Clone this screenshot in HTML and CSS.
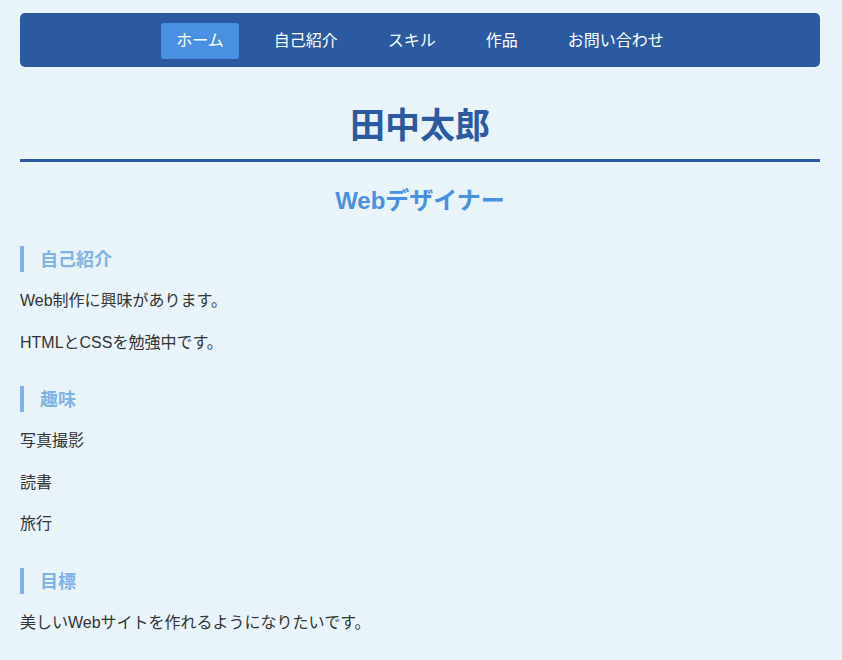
FILE: index.html
```html
<!DOCTYPE html>
<html lang="ja">
<head>
    <meta charset="UTF-8">
    <meta name="viewport" content="width=device-width, initial-scale=1.0">
    <title>田中太郎</title>
    <link rel="stylesheet" href="styles.css">
</head>
<body>
    <div class="page">
        <nav class="main-nav">
            <a href="#" class="active">ホーム</a>
            <a href="#about">自己紹介</a>
            <a href="#skills">スキル</a>
            <a href="#works">作品</a>
            <a href="#contact">お問い合わせ</a>
        </nav>

        <header class="profile-header">
            <h1>田中太郎</h1>
            <p class="job-title">Webデザイナー</p>
        </header>

        <section id="about">
            <h2>自己紹介</h2>
            <p>Web制作に興味があります。</p>
            <p>HTMLとCSSを勉強中です。</p>
        </section>

        <section>
            <h2>趣味</h2>
            <ul class="hobby-list">
                <li>写真撮影</li>
                <li>読書</li>
                <li>旅行</li>
            </ul>
        </section>

        <section>
            <h2>目標</h2>
            <p>美しいWebサイトを作れるようになりたいです。</p>
        </section>
    </div>
</body>
</html>
```

FILE: styles.css
```css
body {
    margin: 0;
    padding: 0 20px;
    background-color: #e8f4fa;
    color: #333;
    font-family: "Liberation Sans", "Noto Sans CJK JP", sans-serif;
    font-size: 16px;
}
.page {
    max-width: 800px;
    padding-top: 13px;
}
.main-nav {
    background-color: #2b5aa0;
    border-radius: 5px;
    padding: 10px 0 8px;
    display: flex;
    justify-content: center;
    gap: 20px;
}
.main-nav a {
    color: white;
    text-decoration: none;
    padding: 0 15px;
    line-height: 36px;
    border-radius: 3px;
}
.main-nav a.active {
    background-color: #4a90e2;
}
.profile-header {
    text-align: center;
}
h1 {
    color: #2b5aa0;
    font-size: 35px;
    line-height: 42px;
    margin: 38px 0 0;
    padding-bottom: 12px;
    border-bottom: 3px solid #2b5aa0;
}
.job-title {
    color: #4a90e2;
    font-size: 24px;
    font-weight: bold;
    line-height: 29px;
    margin: 24px 0 0;
}
h2 {
    color: #7fb2e6;
    font-size: 18px;
    line-height: 23px;
    margin: 31px 0 15px;
    padding: 3px 0 0 16px;
    border-left: 4px solid #7fb2e6;
}
p {
    line-height: 25.6px;
    margin: 16px 0;
}
.hobby-list {
    list-style: none;
    margin: 0;
    padding: 0;
}
.hobby-list li {
    line-height: 25.6px;
    margin: 16px 0;
}
```
